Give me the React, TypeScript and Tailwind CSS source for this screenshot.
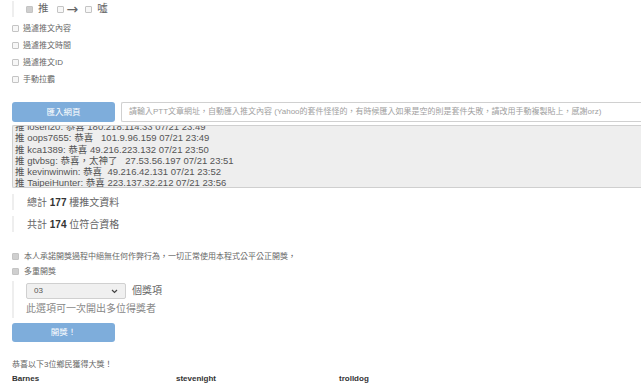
const FONT = "font-['Liberation_Sans','Noto_Sans_CJK_TC',sans-serif]";

const pushes = [
  "推 loserl20: 恭喜 180.218.114.33 07/21 23:49",
  "推 oops7655: 恭喜   101.9.96.159 07/21 23:49",
  "推 kca1389: 恭喜 49.216.223.132 07/21 23:50",
  "推 gtvbsg: 恭喜，太神了   27.53.56.197 07/21 23:51",
  "推 kevinwinwin: 恭喜  49.216.42.131 07/21 23:52",
  "推 TaipeiHunter: 恭喜 223.137.32.212 07/21 23:56",
];

const Box = ({ checked = false }: { checked?: boolean }) => (
  <span
    className={
      "inline-block w-[7px] h-[7px] border border-[#c4c4c4] rounded-[1px] shrink-0 " +
      (checked ? "bg-[#cfcfcf]" : "bg-[#f7f7f7]")
    }
  />
);

const CheckRow = ({ label, checked = false }: { label: string; checked?: boolean }) => (
  <div className="h-[17px] flex items-center gap-[4px] text-[8px] text-[#666]">
    <Box checked={checked} />
    <span>{label}</span>
  </div>
);

export default function App() {
  return (
    <div className={`${FONT} w-[641px] h-[392px] overflow-hidden bg-white text-[#555] pl-3`}>
      {/* push / arrow / boo filter */}
      <div className="mt-[1px] h-[16px] border-l-2 border-[#eee] flex items-center pl-3 text-[10.5px] text-[#666]">
        <Box checked />
        <span className="ml-[5px] mr-[8px]">推</span>
        <Box />
        <span className="ml-[3px] mr-[7px] text-[14px] leading-[16px] font-['DejaVu_Sans',sans-serif]">→</span>
        <Box />
        <span className="ml-[5px]">噓</span>
      </div>

      <div className="mt-[3px]">
        <CheckRow label="過濾推文內容" />
        <CheckRow label="過濾推文時間" />
        <CheckRow label="過濾推文ID" />
        <CheckRow label="手動拉霸" />
      </div>

      <div className="mt-[14px] flex gap-[6px] h-[20px]">
        <button className="w-[103px] shrink-0 rounded-[3px] bg-[#7eaddb] text-white text-[8.5px]">匯入網頁</button>
        <div className="flex-1 border border-r-0 border-[#d0d0d0] rounded-l-[2px] flex items-center pl-[7px] text-[8px] text-[#a0a0a0] whitespace-nowrap overflow-hidden">
          請輸入PTT文章網址，自動匯入推文內容 (Yahoo的套件怪怪的，有時候匯入如果是空的則是套件失敗，請改用手動複製貼上，感謝orz)
        </div>
      </div>

      <div className="mt-[3px] h-[63px] border border-r-0 border-[#cfcfcf] rounded-l-[2px] bg-[#eeeeee] overflow-hidden pl-[2px]">
        <div className="-mt-[5px] text-[9.5px] leading-[11.3px] text-[#555] whitespace-pre">
          {pushes.map((p) => (
            <div key={p}>{p}</div>
          ))}
        </div>
      </div>

      <div className="mt-[6px] h-[16px] border-l-2 border-[#eee] pl-[13px] flex items-center text-[10px] text-[#666]">
        總計&nbsp;<b className="text-[#333]">177</b>&nbsp;樓推文資料
      </div>
      <div className="mt-[6px] h-[16px] border-l-2 border-[#eee] pl-[13px] flex items-center text-[10px] text-[#666]">
        共計&nbsp;<b className="text-[#333]">174</b>&nbsp;位符合資格
      </div>

      <div className="mt-[17px] h-[15px] flex items-center gap-[5px] text-[8px] text-[#666]">
        <Box checked />
        <span>本人承諾開獎過程中絕無任何作弊行為，一切正常使用本程式公平公正開獎，</span>
      </div>
      <div className="h-[15px] flex items-center gap-[5px] text-[8px] text-[#666]">
        <Box checked />
        <span>多重開獎</span>
      </div>

      <div className="mt-[2px] border-l-2 border-[#eee] pl-3 pt-[2px] pb-[2px]">
        <div className="h-[16px] flex items-center gap-[6px]">
          <div className="w-[100px] h-[16px] border border-[#d0d0d0] rounded-[2px] bg-[#f0f0f0] flex items-center justify-between px-[7px] text-[8px] text-[#555]">
            <span>03</span>
            <svg width="7" height="5" viewBox="0 0 7 5">
              <path d="M1 1 L3.5 3.5 L6 1" fill="none" stroke="#444" strokeWidth="1.2" />
            </svg>
          </div>
          <span className="text-[10px] leading-[14px] text-[#666]">個獎項</span>
        </div>
        <div className="mt-[3px] text-[10px] leading-[14px] text-[#888]">此選項可一次開出多位得獎者</div>
      </div>

      <button className="mt-[5px] w-[103px] h-[19px] rounded-[3px] bg-[#7eaddb] text-white text-[8.5px] block">開獎！</button>

      <div className="mt-[17px] text-[8px] text-[#666] leading-[12px]">恭喜以下3位鄉民獲得大獎！</div>
      <div className="mt-[2px] flex text-[8px] font-bold text-[#333]">
        <div className="w-[164px]">Barnes</div>
        <div className="w-[163px]">stevenight</div>
        <div className="w-[163px]">trolldog</div>
      </div>
    </div>
  );
}
